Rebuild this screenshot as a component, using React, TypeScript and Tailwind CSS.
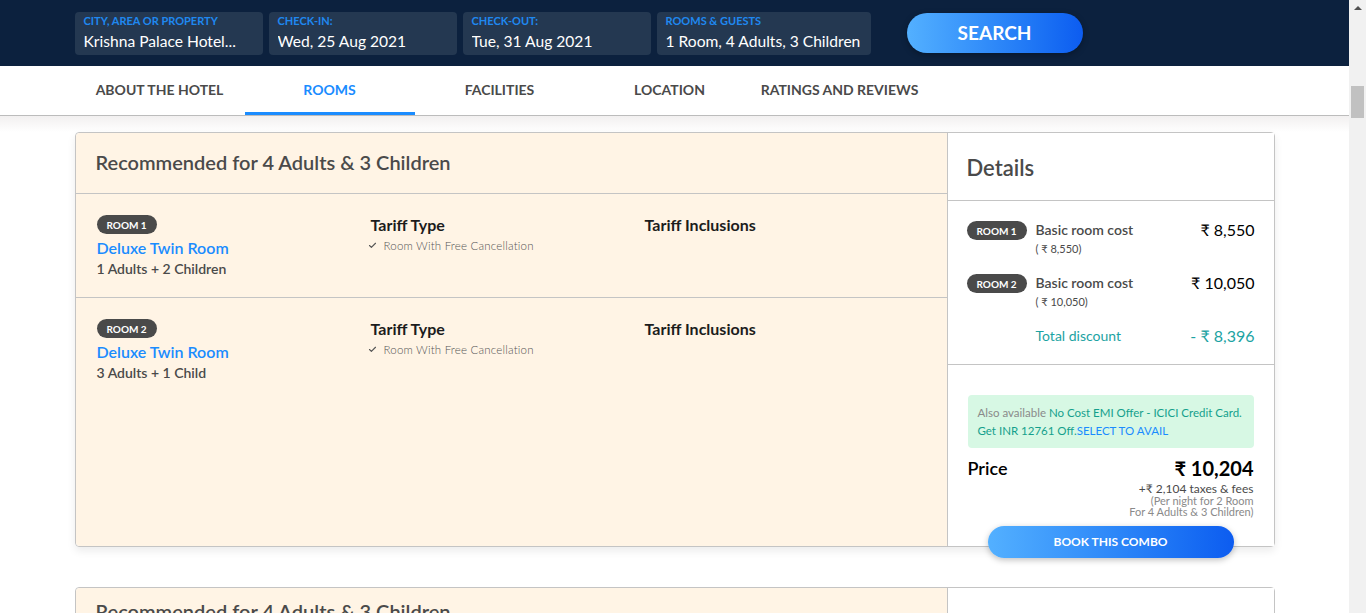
import { Check } from 'lucide-react';

const FIELDS = [
  { label: 'CITY, AREA OR PROPERTY', value: 'Krishna Palace Hotel...', w: 'w-[188px]' },
  { label: 'CHECK-IN:', value: 'Wed, 25 Aug 2021', w: 'w-[188px]' },
  { label: 'CHECK-OUT:', value: 'Tue, 31 Aug 2021', w: 'w-[188px]' },
  { label: 'ROOMS & GUESTS', value: '1 Room, 4 Adults, 3 Children', w: 'w-[214px]' },
];

const TABS = ['ABOUT THE HOTEL', 'ROOMS', 'FACILITIES', 'LOCATION', 'RATINGS AND REVIEWS'];

const ROOMS = [
  { badge: 'ROOM 1', name: 'Deluxe Twin Room', guests: '1 Adults + 2 Children' },
  { badge: 'ROOM 2', name: 'Deluxe Twin Room', guests: '3 Adults + 1 Child' },
];

function Badge({ children }: { children: string }) {
  return (
    <span className="flex h-[19px] w-fit items-center rounded-full bg-[#4a4a4a] px-[10px] text-[10px] font-bold leading-none text-white">
      {children}
    </span>
  );
}

function RoomRow({ room, last }: { room: (typeof ROOMS)[number]; last?: boolean }) {
  return (
    <div className={`flex px-[21px] pt-[21px] ${last ? '' : 'h-[104px] border-b border-[#c4c4c4]'}`}>
      <div className="w-[274px]">
        <Badge>{room.badge}</Badge>
        <div className="mt-[4px] text-[16px] font-semibold leading-[20px] text-[#1a8cff]">{room.name}</div>
        <div className="mt-[2px] text-[14px] font-semibold leading-[18px] text-[#4a4a4a]">{room.guests}</div>
      </div>
      <div className="w-[274px] pt-[-1px]">
        <div className="text-[16px] font-bold leading-[20px] text-[#1c1c1c]">Tariff Type</div>
        <div className="mt-[2px] flex items-center gap-[7px] text-[11.5px] font-light tracking-[0.2px] text-[#555]">
          <Check className="-ml-[3px] h-[9px] w-[9px] text-[#555]" strokeWidth={3} />
          Room With Free Cancellation
        </div>
      </div>
      <div>
        <div className="text-[16px] font-bold leading-[20px] text-[#1c1c1c]">Tariff Inclusions</div>
      </div>
    </div>
  );
}

function CostRow({ badge, cost }: { badge: string; cost: string }) {
  return (
    <div className="flex items-start">
      <div className="w-[69px]">
        <Badge>{badge}</Badge>
      </div>
      <div className="flex-1">
        <div className="text-[14px] font-semibold leading-[18px] text-[#4a4a4a]">Basic room cost</div>
        <div className="mt-[3px] text-[11px] leading-[13px] text-[#4a4a4a]">( ₹ {cost})</div>
      </div>
      <div className="text-[16px] leading-[18px] text-black">₹ {cost}</div>
    </div>
  );
}

export default function App() {
  return (
    <div className="flex h-[613px] w-full overflow-hidden bg-white font-['Lato','Noto_Sans',sans-serif]">
      <div className="flex-1 overflow-hidden">
        {/* search bar */}
        <div className="flex h-[66px] items-center bg-[#0c213e]">
          <div className="mx-auto flex w-[1200px] items-center">
            <div className="flex gap-[6px]">
              {FIELDS.map((f) => (
                <div key={f.label} className={`${f.w} h-[43px] rounded-[4px] bg-[#243851] pl-[9px] pr-[4px] pt-[2px]`}>
                  <div className="text-[11px] font-bold leading-[14px] text-[#1f88f0]">{f.label}</div>
                  <div className="mt-[3px] overflow-hidden whitespace-nowrap text-[15.6px] leading-[20px] text-white">{f.value}</div>
                </div>
              ))}
            </div>
            <button className="ml-[36px] h-[40px] w-[176px] rounded-full bg-gradient-to-r from-[#53b0ff] to-[#0d5cf0] text-[19px] font-bold text-white shadow-[0_2px_6px_rgba(0,0,0,0.3)]">
              SEARCH
            </button>
          </div>
        </div>

        {/* tabs */}
        <div className="border-b border-[#bcbcbc] bg-white">
          <div className="mx-auto flex w-[1200px]">
            {TABS.map((t) => (
              <div
                key={t}
                className={`flex h-[49px] w-[170px] items-center justify-center border-b-[3px] pt-[1px] text-[14px] font-bold ${
                  t === 'ROOMS' ? 'border-[#1a8cff] text-[#1a8cff]' : 'border-transparent text-[#4a4a4a]'
                }`}
              >
                {t}
              </div>
            ))}
          </div>
        </div>
        <div className="h-[16px] bg-gradient-to-b from-[#f2f0f0] to-white" />

        {/* combo card */}
        <div className="mx-auto w-[1200px]">
          <div className="flex h-[415px] rounded-[4px] border border-[#c4c4c4] shadow-[0_4px_8px_rgba(0,0,0,0.08)]">
            <div className="w-[871px] rounded-l-[4px] bg-[#fff4e5]">
              <div className="flex h-[61px] items-center border-b border-[#c4c4c4] px-[20px] pb-[2px] text-[20px] font-semibold text-[#4a4a4a]">
                Recommended for 4 Adults &amp; 3 Children
              </div>
              {ROOMS.map((r, i) => (
                <RoomRow key={r.badge} room={r} last={i === ROOMS.length - 1} />
              ))}
            </div>
            <div className="flex flex-1 flex-col border-l border-[#c4c4c4] bg-white">
              <div className="flex h-[68px] items-center border-b border-[#c4c4c4] px-[19px] pt-[1px] text-[22px] font-semibold text-[#4a4a4a]">
                Details
              </div>
              <div className="flex h-[164px] flex-col border-b border-[#c4c4c4] px-[19px] pt-[20px]">
                <CostRow badge="ROOM 1" cost="8,550" />
                <div className="mt-[19px]">
                  <CostRow badge="ROOM 2" cost="10,050" />
                </div>
                <div className="mt-[19px] flex text-[#1ca3a3]">
                  <div className="w-[69px]" />
                  <div className="flex-1 text-[14px] leading-[18px]">Total discount</div>
                  <div className="text-[16px] leading-[18px]">- ₹ 8,396</div>
                </div>
              </div>
              <div className="relative flex-1 px-[20px] pt-[30px]">
                <div className="h-[53px] rounded-[4px] bg-[#d7f8e4] px-[10px] pt-[9px] text-[11.5px] leading-[18px]">
                  <span className="text-[#8a8a8a]">Also available </span>
                  <span className="text-[#14a08c]">No Cost EMI Offer - ICICI Credit Card.</span>
                  <br />
                  <span className="text-[#14a08c]">Get INR 12761 Off.</span>
                  <span className="text-[#1a8cff]">SELECT TO AVAIL</span>
                </div>
                <div className="mt-[8px] flex items-start justify-between">
                  <div className="text-[18px] font-semibold leading-[24px] text-black">Price</div>
                  <div className="text-[20px] font-bold leading-[24px] text-black">₹ 10,204</div>
                </div>
                <div className="mt-[2px] text-right text-[12px] leading-[13px] text-[#4a4a4a]">+₹ 2,104 taxes &amp; fees</div>
                <div className="text-right text-[11px] leading-[11px] text-[#8a8a8a]">(Per night for 2 Room</div>
                <div className="text-right text-[11px] leading-[11px] text-[#8a8a8a]">For 4 Adults &amp; 3 Children)</div>
                <button className="absolute bottom-[-12px] left-[40px] h-[32px] w-[246px] rounded-full bg-gradient-to-r from-[#53b0ff] to-[#0d5cf0] text-[12px] font-bold text-white shadow-[0_2px_6px_rgba(0,0,0,0.25)]">
                  BOOK THIS COMBO
                </button>
              </div>
            </div>
          </div>

          <div className="mt-[40px] flex h-[200px] rounded-[4px] border border-[#c4c4c4]">
            <div className="w-[871px] rounded-l-[4px] bg-[#fff4e5] px-[20px] pt-[8px] text-[20px] font-semibold text-[#4a4a4a]">
              Recommended for 4 Adults &amp; 3 Children
            </div>
            <div className="flex-1 border-l border-[#c4c4c4] bg-white" />
          </div>
        </div>
      </div>

      {/* scrollbar */}
      <div className="flex w-[17px] flex-col items-center bg-[#f1f1f1]">
        <div className="mt-[6px] h-0 w-0 border-x-[4px] border-b-[4px] border-x-transparent border-b-[#505050]" />
        <div className="mt-[76px] h-[32px] w-[13px] bg-[#c1c1c1]" />
      </div>
    </div>
  );
}
